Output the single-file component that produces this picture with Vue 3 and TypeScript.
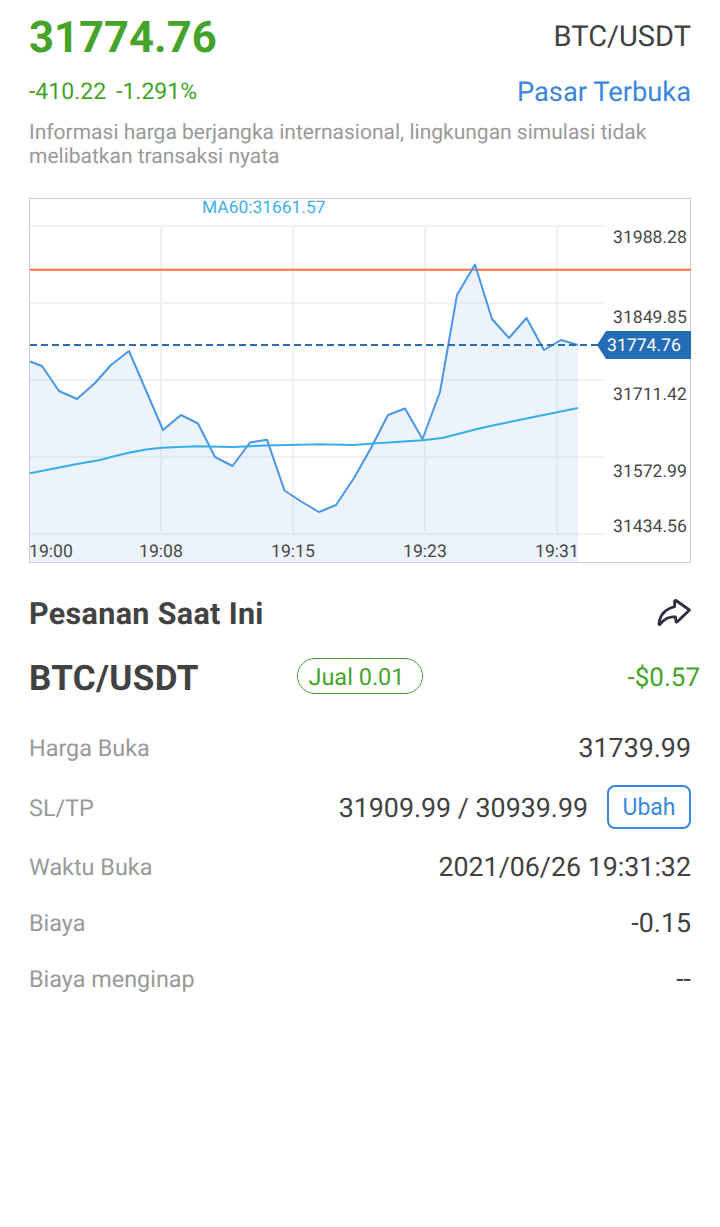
<script setup lang="ts">
const price: [number, number][] = [
  [30, 361.5], [42, 366], [59, 391], [77, 399], [95, 383], [111, 365], [129, 351], [163, 430],
  [181, 415], [198, 423.5], [215, 457], [232.5, 466], [250, 442.5], [267, 439.7], [284.5, 490.5],
  [302, 502], [319, 512], [336, 505], [354, 478], [371, 448], [388, 415], [405, 408.5],
  [422.5, 439], [440, 392], [457, 295], [475, 264.5], [492, 319], [509, 338], [526.5, 318],
  [544, 350], [561, 340], [578, 345],
]
const ma: [number, number][] = [
  [30, 473.2], [77, 464], [100, 460], [115, 456], [130, 452.5], [146, 449.5], [162, 447.7], [197, 446.3], [233, 447],
  [267, 445.5], [320, 444.2], [353, 445], [373, 443.5], [423, 440.3], [442, 438], [458, 434], [475, 429.5], [495, 425], [578, 408],
]
const toPoints = (list: [number, number][]) => list.map(([x, y]) => `${x},${y}`).join(' ')
const pricePoints = toPoints(price)
const maPoints = toPoints(ma)
const areaPoints = `${pricePoints} 578,562 30,562`
const gridY = [226, 303, 380, 457, 534]
const gridX = [161, 293, 425, 557]
const priceLabels = [
  { text: '31988.28', y: 243 },
  { text: '31849.85', y: 323 },
  { text: '31711.42', y: 400 },
  { text: '31572.99', y: 477 },
  { text: '31434.56', y: 532 },
]
const timeLabels = [
  { text: '19:00', x: 29 },
  { text: '19:08', x: 139 },
  { text: '19:15', x: 271 },
  { text: '19:23', x: 403 },
  { text: '19:31', x: 535 },
]
</script>

<template>
  <main class="page">
    <header class="head">
      <div class="head-row">
        <div class="price">31774.76</div>
        <div class="symbol">BTC/USDT</div>
      </div>
      <div class="sub-row">
        <div class="change"><span>-410.22</span><span>-1.291%</span></div>
        <div class="market">Pasar Terbuka</div>
      </div>
      <p class="notice">Informasi harga berjangka internasional, lingkungan simulasi tidak melibatkan transaksi nyata</p>
    </header>

    <div class="chart">
      <svg class="chart-svg" width="720" height="367" viewBox="0 197 720 367">
        <rect x="29.5" y="198.5" width="661" height="364" fill="#fff" stroke="#cfcfcf" />
        <line v-for="y in gridY" :key="'h' + y" x1="30" x2="605" :y1="y" :y2="y" stroke="#f2f2f3" stroke-width="2" />
        <line v-for="x in gridX" :key="'v' + x" :x1="x" :x2="x" y1="226" y2="534" stroke="#f2f2f3" stroke-width="2" />
        <polygon :points="areaPoints" fill="#2a7de1" fill-opacity="0.09" />
        <line x1="30" x2="691" y1="269.7" y2="269.7" stroke="#ff6d43" stroke-width="2" />
        <polyline :points="pricePoints" fill="none" stroke="#4a97e3" stroke-width="2" stroke-linejoin="round" />
        <polyline :points="maPoints" fill="none" stroke="#37ade9" stroke-width="2" stroke-linejoin="round" />
        <line x1="30" x2="600" y1="345" y2="345" stroke="#2b6db5" stroke-width="2" stroke-dasharray="7 4" />
        <polygon points="597,345 606,331 691,331 691,359 606,359" fill="#246cb6" />
        <text x="202" y="213" class="ma-text">MA60:31661.57</text>
        <text v-for="l in priceLabels" :key="l.text" x="613" :y="l.y" class="axis-text">{{ l.text }}</text>
        <text v-for="t in timeLabels" :key="t.text" :x="t.x" y="557" class="axis-text">{{ t.text }}</text>
        <text x="607" y="351" class="tag-text">31774.76</text>
      </svg>
    </div>

    <section class="order">
      <div class="order-title-row">
        <h2 class="order-title">Pesanan Saat Ini</h2>
        <svg class="share" width="36" height="32" viewBox="0 0 36 32" fill="none">
          <path
            d="M19 3.5 L32.5 13 L20 25 C19.5 25.4 19 25 19 24.4 L18.5 20 C13 19 7 22 3.2 27.3 C2.4 28 1.8 27.6 2 26.6 C3 17 10 11.6 17.6 9.6 L17.6 4.2 C17.7 3.4 18.4 3.1 19 3.5 Z"
            stroke="#2d3040"
            stroke-width="2.8"
            stroke-linejoin="round"
          />
        </svg>
      </div>

      <div class="position-row">
        <div class="position-symbol">BTC/USDT</div>
        <div class="pill">Jual 0.01</div>
        <div class="pnl">-$0.57</div>
      </div>

      <dl class="details">
        <div class="detail d1"><dt>Harga Buka</dt><dd>31739.99</dd></div>
        <div class="detail d2">
          <dt class="nudge">SL/TP</dt>
          <dd class="with-btn"><span class="nudge">31909.99 / 30939.99</span><button class="edit" type="button">Ubah</button></dd>
        </div>
        <div class="detail d3"><dt>Waktu Buka</dt><dd>2021/06/26 19:31:32</dd></div>
        <div class="detail d4"><dt>Biaya</dt><dd>-0.15</dd></div>
        <div class="detail d5"><dt>Biaya menginap</dt><dd>--</dd></div>
      </dl>
    </section>
  </main>
</template>

<style>
html, body { margin: 0; background: #fff; }
</style>

<style scoped>
.page {
  width: 720px;
  height: 1227px;
  box-sizing: border-box;
  padding: 0 29px;
  font-family: Roboto, "Liberation Sans", sans-serif;
  color: #424242;
  overflow: hidden;
  text-rendering: geometricPrecision;
}
.head { height: 197px; }
.head-row {
  display: flex;
  justify-content: space-between;
  align-items: center;
  height: 74px;
}
.price { font-size: 43.6px; font-weight: 700; color: #45a329; }
.symbol { font-size: 29px; color: #424242; }
.sub-row {
  display: flex;
  justify-content: space-between;
  align-items: center;
  height: 35px;
}
.change { display: flex; gap: 10px; font-size: 23px; color: #45a329; }
.market { font-size: 27.3px; color: #3a87db; }
.notice {
  margin: 0;
  padding-top: 12px;
  font-size: 21px;
  line-height: 24px;
  color: #999;
}
.chart { margin: 0 -29px; height: 367px; }
.chart-svg { display: block; }
.ma-text { font-size: 17.4px; fill: #3cb0ea; }
.axis-text { font-size: 17.6px; fill: #484848; }
.tag-text { font-size: 17.6px; fill: #fff; }
.order { padding-top: 29px; }
.order-title-row {
  display: flex;
  justify-content: space-between;
  align-items: center;
  height: 42px;
}
.order-title { margin: 0; font-size: 30.5px; font-weight: 700; letter-spacing: 0.33px; color: #424242; }
.share { margin: -3px -1.5px 0 0; }
.position-row {
  display: flex;
  align-items: center;
  height: 38px;
  margin-top: 23px;
}
.position-symbol { width: 268px; padding-top: 2px; font-size: 35px; font-weight: 700; letter-spacing: 0.35px; color: #424242; }
.pill {
  box-sizing: border-box;
  width: 126px;
  height: 36px;
  margin-bottom: 2px;
  padding-right: 7px;
  border: 1px solid #45a329;
  border-radius: 18px;
  font-size: 23.5px;
  line-height: 36px;
  text-align: center;
  color: #45a329;
}
.pnl { margin-left: auto; margin-right: -9px; padding-top: 2px; font-size: 26px; color: #45a329; }
.details { margin: 31px 0 0; }
.detail {
  display: flex;
  justify-content: space-between;
  align-items: center;
}
.d1 { height: 42px; }
.d2 { height: 46px; margin-top: 15px; }
.d3 { height: 42px; margin-top: 16px; }
.d4 { height: 40px; margin-top: 15px; }
.d5 { height: 40px; margin-top: 16px; }
.nudge { padding-top: 2px; }
dt { font-size: 23.4px; color: #999; }
dd { margin: 0; font-size: 26.8px; color: #424242; }
.with-btn { display: flex; align-items: center; gap: 19px; }
.edit {
  box-sizing: border-box;
  width: 84px;
  height: 44px;
  padding: 0;
  background: #fff;
  border: 2px solid #3a87db;
  border-radius: 8px;
  font-family: inherit;
  font-size: 23px;
  color: #3a87db;
}
</style>
